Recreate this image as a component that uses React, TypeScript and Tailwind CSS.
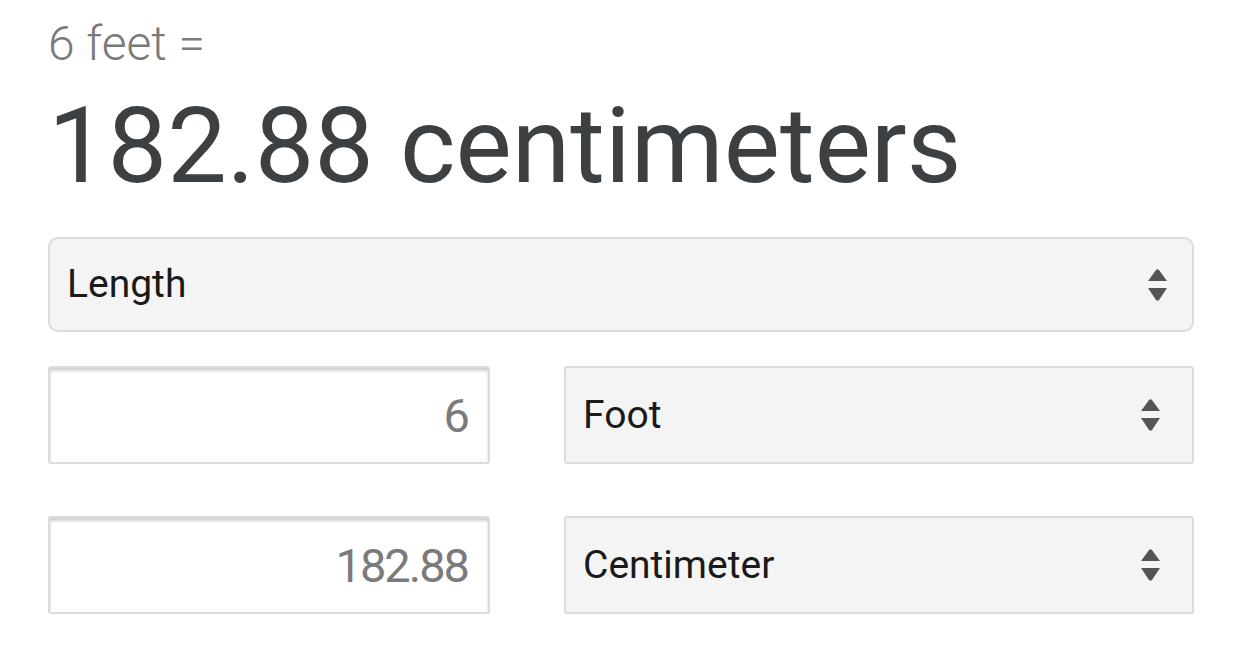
import React from "react";

function Arrows() {
  return (
    <svg width="21" height="34" viewBox="0 0 21 34" className="shrink-0">
      <path d="M1 13 L9 2 Q10.5 0.5 12 2 L20 13 Z" fill="#555555" />
      <path d="M1 20 L20 20 L12 32 Q10.5 33.5 9 32 Z" fill="#555555" />
    </svg>
  );
}

function SelectBox({ label, rounded, pr }: { label: string; rounded: string; pr: string }) {
  return (
    <div
      className={`flex items-center justify-between h-full border-2 border-[#dcdcdc] bg-[#f4f4f4] pl-[17px] ${pr} ${rounded}`}
    >
      <span className="text-[39px] text-[#1a1a1a] leading-none">{label}</span>
      <Arrows />
    </div>
  );
}

function InputBox({ value }: { value: string }) {
  return (
    <div className="relative h-full border-2 border-[#dcdcdc] bg-white rounded-[3px] shadow-[inset_0_3px_3px_rgba(0,0,0,0.18)] flex items-center justify-end pr-[20px]">
      <span className="text-[#7b7b7b] leading-none text-[47px] tracking-[-2px]">{value}</span>
    </div>
  );
}

export default function App() {
  return (
    <div
      className="w-[1242px] h-[650px] bg-white px-[48px] flex flex-col overflow-hidden"
      style={{ fontFamily: "Roboto, 'Open Sans', sans-serif" }}
    >
      <div className="mt-[21px] h-[46px] text-[48px] leading-[46px] font-light text-[#7a7a7a]">
        6 feet =
      </div>
      <div className="mt-[27px] h-[105px] text-[106px] leading-[105px] text-[#3c4043]">
        182.88 centimeters
      </div>
      <div className="mt-[38px] h-[95px] w-[1146px]">
        <SelectBox label="Length" rounded="rounded-[10px]" pr="pr-[24px]" />
      </div>
      <div className="mt-[34px] flex gap-[74px] h-[98px] w-[1146px]">
        <div className="w-[442px] h-full">
          <InputBox value="6" />
        </div>
        <div className="flex-1 h-full">
          <SelectBox label="Foot" rounded="rounded-[3px]" pr="pr-[31px]" />
        </div>
      </div>
      <div className="mt-[52px] flex gap-[74px] h-[98px] w-[1146px]">
        <div className="w-[442px] h-full">
          <InputBox value="182.88" />
        </div>
        <div className="flex-1 h-full">
          <SelectBox label="Centimeter" rounded="rounded-[3px]" pr="pr-[31px]" />
        </div>
      </div>
    </div>
  );
}
